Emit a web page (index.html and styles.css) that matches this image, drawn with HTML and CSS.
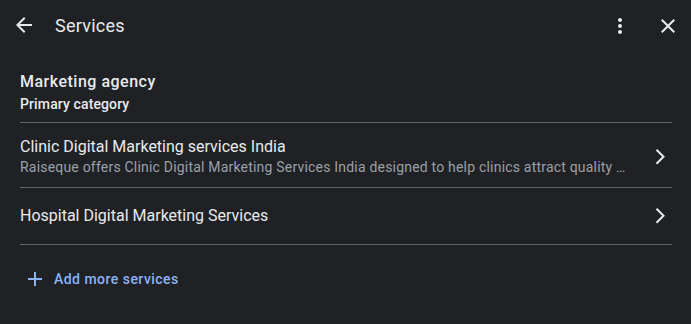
FILE: index.html
```html
<!DOCTYPE html>
<html lang="en">
<head>
<meta charset="utf-8">
<title>Services</title>
<link rel="stylesheet" href="styles.css">
</head>
<body>
<div class="panel">
  <header class="header">
    <button class="icon-btn back" aria-label="Back">
      <svg viewBox="0 0 24 24" width="24" height="24"><path d="M20 11H7.83l5.59-5.59L12 4l-8 8 8 8 1.41-1.41L7.83 13H20v-2z"/></svg>
    </button>
    <h1 class="title">Services</h1>
    <div class="header-actions">
      <button class="icon-btn" aria-label="More">
        <svg viewBox="0 0 24 24" width="24" height="24"><path d="M12 8c1.1 0 2-.9 2-2s-.9-2-2-2-2 .9-2 2 .9 2 2 2zm0 2c-1.1 0-2 .9-2 2s.9 2 2 2 2-.9 2-2-.9-2-2-2zm0 6c-1.1 0-2 .9-2 2s.9 2 2 2 2-.9 2-2-.9-2-2-2z"/></svg>
      </button>
      <button class="icon-btn" aria-label="Close">
        <svg viewBox="0 0 24 24" width="24" height="24"><path d="M19 6.41 17.59 5 12 10.59 6.41 5 5 6.41 10.59 12 5 17.59 6.41 19 12 13.41 17.59 19 19 17.59 13.41 12z"/></svg>
      </button>
    </div>
  </header>

  <main class="content">
    <section class="category">
      <div class="category-name">Marketing agency</div>
      <div class="category-label">Primary category</div>
    </section>

    <div class="row row-two">
      <div class="row-text">
        <div class="row-title">Clinic Digital Marketing services India</div>
        <div class="row-desc">Raiseque offers Clinic Digital Marketing Services India designed to help clinics attract quality patients and grow their practice.</div>
      </div>
      <svg class="chevron" viewBox="0 0 24 24" width="24" height="24"><polyline points="8.5,4.8 15.5,11.8 8.5,18.8"/></svg>
    </div>

    <div class="row row-one">
      <div class="row-text">
        <div class="row-title">Hospital Digital Marketing Services</div>
      </div>
      <svg class="chevron" viewBox="0 0 24 24" width="24" height="24"><polyline points="8.5,4.8 15.5,11.8 8.5,18.8"/></svg>
    </div>

    <button class="add-btn">
      <svg viewBox="0 0 24 24" width="24" height="24"><path d="M19 13h-6v6h-2v-6H5v-2h6V5h2v6h6v2z"/></svg>
      <span>Add more services</span>
    </button>
  </main>
</div>
</body>
</html>
```

FILE: styles.css
```css
* { box-sizing: border-box; }

html, body {
  margin: 0;
  padding: 0;
  background: #202124;
}

body {
  font-family: Roboto, "Liberation Sans", Arial, sans-serif;
  color: #e8eaed;
  width: 691px;
  height: 324px;
  overflow: hidden;
}

.panel {
  width: 691px;
}

.header {
  display: flex;
  align-items: center;
  height: 51px;
  padding: 0 11px 0 12px;
}

.icon-btn {
  display: flex;
  align-items: center;
  justify-content: center;
  width: 24px;
  height: 24px;
  padding: 0;
  border: 0;
  background: none;
  cursor: pointer;
}

.icon-btn svg {
  fill: #e8eaed;
  display: block;
}

.back {
  margin-top: -1px;
}

.title {
  margin: 0 0 0 19px;
  font-size: 18px;
  line-height: 24px;
  font-weight: 400;
  letter-spacing: 0.25px;
  color: #e8eaed;
  flex: 1;
}

.header-actions {
  display: flex;
  gap: 24px;
}

.content {
  padding: 0 19px 0 20px;
}

.category {
  padding: 19px 0 8px;
  border-bottom: 1px solid #5f6368;
}

.category-name {
  font-size: 16px;
  line-height: 24px;
  font-weight: 500;
  letter-spacing: 0.5px;
}

.category-label {
  font-size: 14px;
  line-height: 20px;
  font-weight: 500;
  letter-spacing: 0.12px;
}

.row {
  display: flex;
  align-items: center;
  border-bottom: 1px solid #5f6368;
}

.row-two {
  padding: 14px 0 10px;
}

.row-one {
  height: 57px;
}

.row-text {
  flex: 1;
  min-width: 0;
  padding-right: 20px;
}

.row-title {
  font-size: 16px;
  line-height: 20px;
  color: #e8eaed;
}

.row-desc {
  font-size: 14px;
  line-height: 20px;
  letter-spacing: 0.2px;
  color: #9aa0a6;
  white-space: nowrap;
  overflow: hidden;
  text-overflow: ellipsis;
}

.chevron {
  flex: none;
  fill: none;
  stroke: #e8eaed;
  stroke-width: 2;
}

.add-btn {
  display: flex;
  align-items: center;
  gap: 7px;
  margin: 22px 0 0 3px;
  padding: 0;
  border: 0;
  background: none;
  font-family: inherit;
  font-size: 14px;
  line-height: 24px;
  font-weight: 500;
  letter-spacing: 0.47px;
  color: #8ab4f8;
  cursor: pointer;
}

.add-btn svg {
  fill: #8ab4f8;
  display: block;
}
```
